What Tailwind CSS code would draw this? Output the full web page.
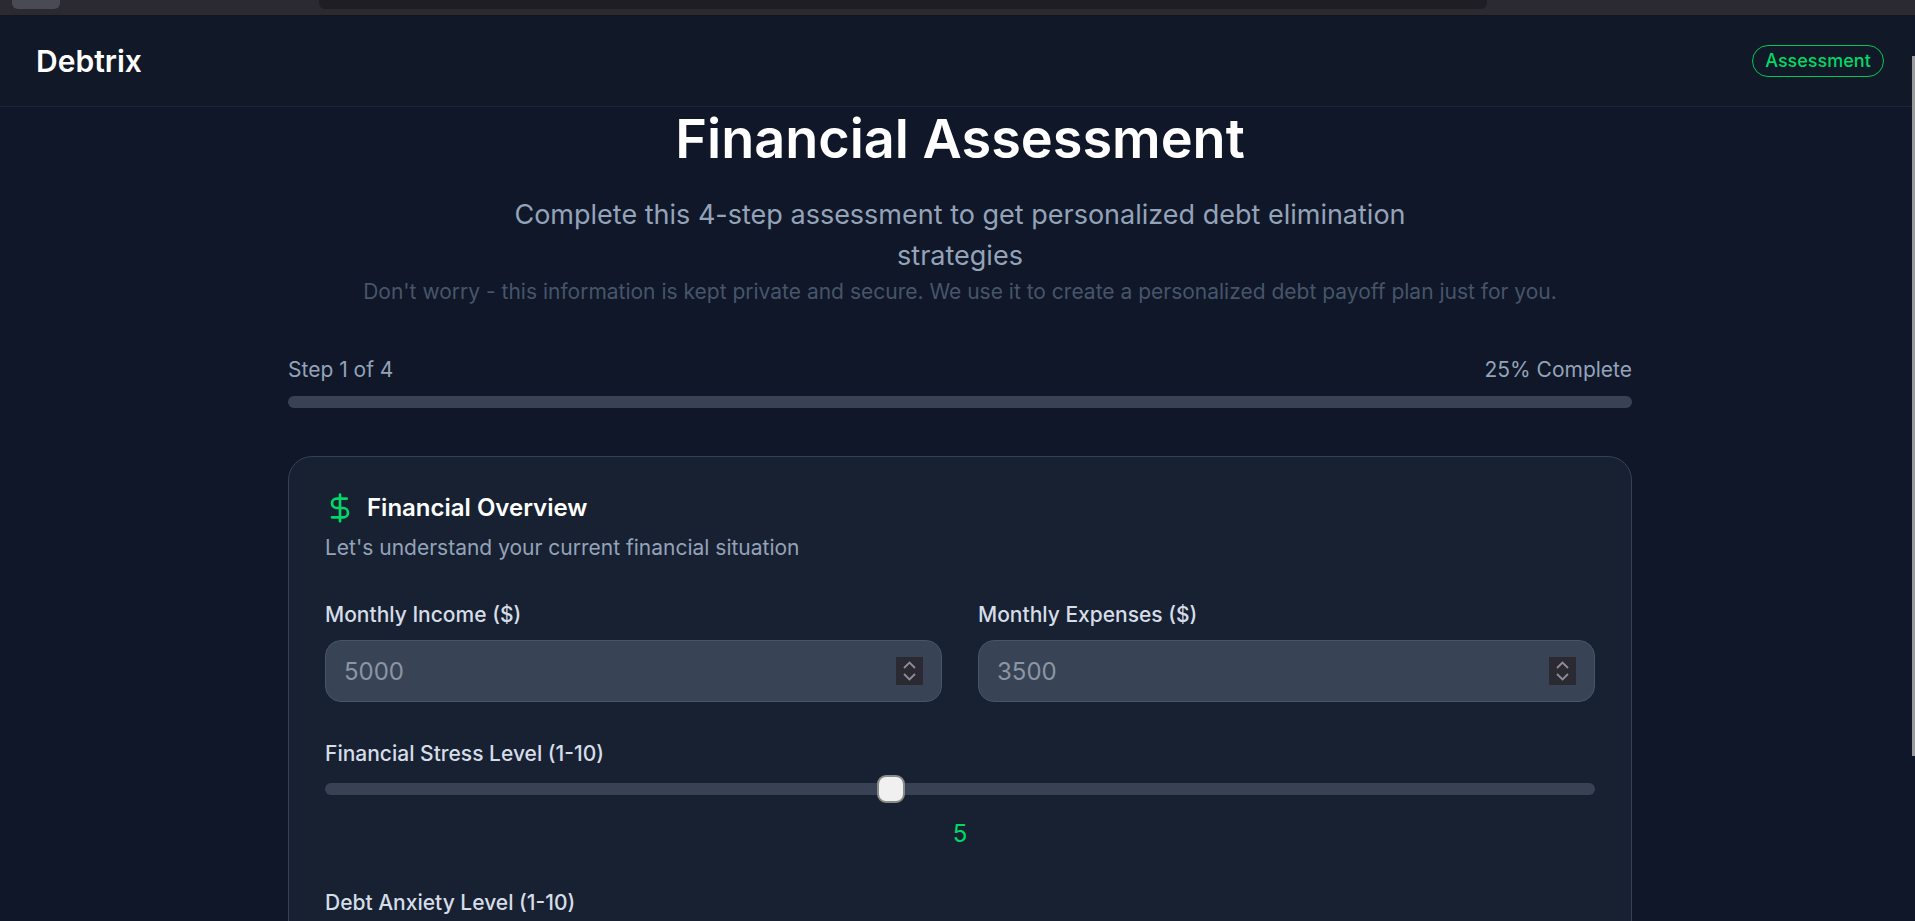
<!DOCTYPE html>
<html lang="en">
<head>
    <meta charset="UTF-8">
    <title>Debtrix - Financial Assessment</title>
    <script src="https://cdn.jsdelivr.net/npm/@tailwindcss/browser@4"></script>
</head>
<body class="h-[921px] overflow-hidden bg-[#0f1729] font-['Inter',sans-serif] text-white">

    <!-- Browser strip -->
    <div class="h-4 bg-[#2b2a33] border-b border-[#16161a] flex items-start pl-3">
        <div class="w-12 h-[9px] bg-[#4a4a55] rounded-b-md"></div>
        <div class="ml-[259px] w-[1168px] h-[9px] bg-[#1f1e24] rounded-b-md"></div>
    </div>

    <div class="relative">
        <!-- Scrollbar -->
        <div class="absolute right-0 top-10 w-[3px] h-[700px] bg-[#9a9a9a]"></div>

        <!-- Header -->
        <header class="h-[91px] mr-[3px] bg-[#111827] border-b border-[#1a2635] pl-9 pr-[28px] flex items-center justify-between">
            <h1 class="text-[30px] font-semibold">Debtrix</h1>
            <span class="h-8 w-[132px] flex items-center justify-center rounded-full border border-[#00c853] text-[#00d965] text-lg font-medium">Assessment</span>
        </header>

        <main class="w-[1344px] ml-[288px]">
            <div class="text-center">
                <h2 class="text-[54px] font-semibold leading-[60px] mt-[2px]">Financial Assessment</h2>
                <p class="mt-[25px] w-[896px] mx-auto text-[27px] leading-[41px] text-[#94a3b8]">Complete this 4-step assessment to get personalized debt elimination strategies</p>
                <p class="text-[21px] leading-7 text-[#475569] mt-[2px]">Don't worry - this information is kept private and secure. We use it to create a personalized debt payoff plan just for you.</p>
            </div>

            <div class="mt-[50px] flex justify-between text-[21px] leading-7 text-[#94a3b8]">
                <span>Step 1 of 4</span>
                <span>25% Complete</span>
            </div>
            <div class="mt-3 h-3 rounded-full bg-[#384254]"></div>

            <!-- Card -->
            <section class="mt-12 h-[600px] rounded-3xl bg-[#182132] border border-[#334155] p-9">
                <div class="flex items-center gap-[11px] -mt-px">
                    <svg class="w-8 h-8 -ml-px text-[#00d965]" viewBox="0 0 24 24" fill="none" stroke="currentColor" stroke-width="2" stroke-linecap="round" stroke-linejoin="round"><line x1="12" x2="12" y1="2" y2="22"/><path d="M17 5H9.5a3.5 3.5 0 0 0 0 7h5a3.5 3.5 0 0 1 0 7H6"/></svg>
                    <h3 class="text-2xl font-semibold leading-8">Financial Overview</h3>
                </div>
                <p class="mt-[10px] text-[21px] leading-7 text-[#94a3b8]">Let's understand your current financial situation</p>

                <div class="mt-[39px] grid grid-cols-2 gap-9">
                    <div>
                        <label class="block text-[21px] font-medium leading-7 text-[#d5dde8]">Monthly Income ($)</label>
                        <div class="relative mt-[11px]">
                            <input type="text" placeholder="5000" class="w-full h-[62px] px-[18px] rounded-2xl bg-[#384355] border border-[#475569] text-2xl placeholder:text-[#8b95a5]">
                            <div class="absolute right-[19px] top-[17px] w-[27px] h-[28px] bg-[#2b2a33] flex items-center justify-center">
                                <svg class="w-[15px] h-[20px] text-[#8f8b99]" viewBox="0 0 15 20" fill="none" stroke="currentColor" stroke-width="1.8"><path d="M2 7 7.5 1.5 13 7M2 13 7.5 18.5 13 13"/></svg>
                            </div>
                        </div>
                    </div>
                    <div>
                        <label class="block text-[21px] font-medium leading-7 text-[#d5dde8]">Monthly Expenses ($)</label>
                        <div class="relative mt-[11px]">
                            <input type="text" placeholder="3500" class="w-full h-[62px] px-[18px] rounded-2xl bg-[#384355] border border-[#475569] text-2xl placeholder:text-[#8b95a5]">
                            <div class="absolute right-[19px] top-[17px] w-[27px] h-[28px] bg-[#2b2a33] flex items-center justify-center">
                                <svg class="w-[15px] h-[20px] text-[#8f8b99]" viewBox="0 0 15 20" fill="none" stroke="currentColor" stroke-width="1.8"><path d="M2 7 7.5 1.5 13 7M2 13 7.5 18.5 13 13"/></svg>
                            </div>
                        </div>
                    </div>
                </div>

                <div class="mt-[38px]">
                    <label class="block text-[21px] font-medium leading-7 text-[#d5dde8]">Financial Stress Level (1-10)</label>
                    <div class="relative mt-[15px] h-3 rounded-full bg-[#384254]">
                        <div class="absolute left-[552px] -top-[8px] w-7 h-7 rounded-[9px] bg-[#f0f0f0] border-2 border-[#8a8a8a]"></div>
                    </div>
                    <div class="mt-[23px] text-center text-2xl leading-8 text-[#00d965]">5</div>
                </div>

                <label class="block mt-[39px] text-[21px] font-medium leading-7 text-[#d5dde8]">Debt Anxiety Level (1-10)</label>
            </section>
        </main>
    </div>
</body>
</html>
